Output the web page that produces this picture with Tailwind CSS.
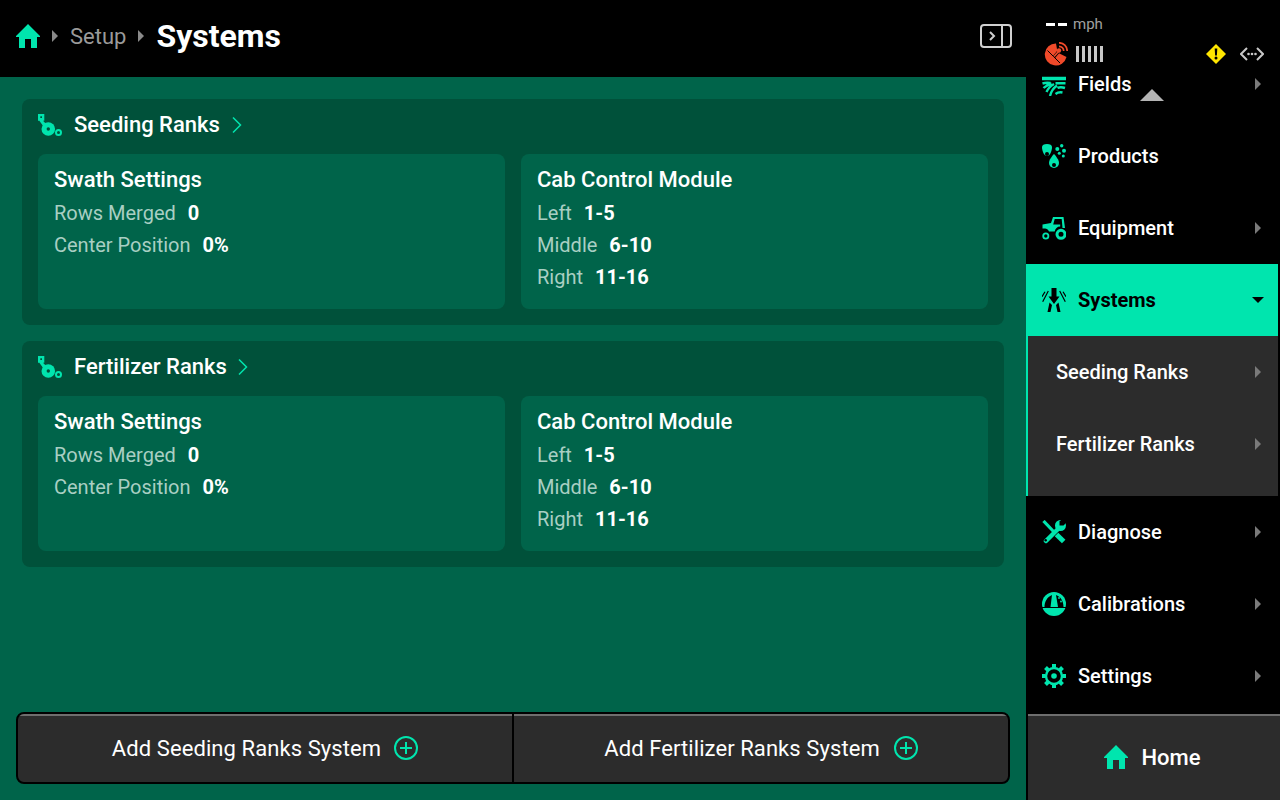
<!DOCTYPE html>
<html lang="en">
<head>
  <meta charset="UTF-8">
  <title>Systems</title>
  <script src="https://cdn.jsdelivr.net/npm/@tailwindcss/browser@4"></script>
</head>
<body class="w-[1280px] h-[800px] overflow-hidden bg-black text-white font-['Roboto',sans-serif]">
  <div class="flex h-[800px]">

    <!-- main column -->
    <div class="w-[1026px] flex flex-col bg-[#00644a]">
      <header class="h-[77px] bg-black flex items-center pl-4 pr-[14px] pb-[5px]">
        <svg class="w-6 h-6 text-[#00e5ae]" viewBox="0 0 24 24" fill="currentColor"><path d="M12 0 24 12v1h-3v11h-6v-9H9v9H3V13H0v-1z"/></svg>
        <svg class="w-[6px] h-3 ml-[12px] text-[#8a8a8a]" viewBox="0 0 6 12" fill="currentColor"><path d="M0 0l6 6-6 6z"/></svg>
        <span class="ml-[12px] text-[22px] text-[#9a9a9a]">Setup</span>
        <svg class="w-[6px] h-3 ml-[12px] text-[#8a8a8a]" viewBox="0 0 6 12" fill="currentColor"><path d="M0 0l6 6-6 6z"/></svg>
        <span class="ml-3 text-[32px] font-bold">Systems</span>
        <svg class="ml-auto w-8 h-6 text-[#d0d0d0]" viewBox="0 0 32 24" fill="none" stroke="currentColor" stroke-width="2"><rect x="1" y="1" width="30" height="22" rx="3"/><path d="M22 1v22"/><path d="M10 8l4 4-4 4"/></svg>
      </header>

      <main class="flex-1 flex flex-col px-4 pt-[22px] pb-4">
        <div class="flex flex-col gap-4 px-[6px]">
          <section class="bg-[#00513a] rounded-lg px-4 pb-4">
            <div class="h-[55px] pb-1 flex items-center">
              <svg class="w-6 h-6 text-[#00e5ae]" viewBox="0 0 24 24" fill="currentColor"><path d="M0 1h6.300v6.700H5L10 13l-3 2.500-5.500-7.500v-.3H0z"/><rect x="2.300" y="3.300" width="1.700" height="1.700" fill="#00513a"/><circle cx="10.300" cy="16" r="6.800"/><circle cx="10.300" cy="16" r="1.700" fill="#00513a"/><circle cx="20.500" cy="19.500" r="2.500" fill="none" stroke="currentColor" stroke-width="2"/></svg>
              <span class="ml-3 text-[22px] font-medium">Seeding Ranks</span>
              <svg class="ml-3 w-[10px] h-4 text-[#00e5ae]" viewBox="0 0 10 16" fill="none" stroke="currentColor" stroke-width="1.500"><path d="M1 .5l7.500 7.500L1 15.500"/></svg>
            </div>
            <div class="grid grid-cols-2 gap-4">
              <div class="h-[155px] bg-[#00644a] rounded-lg px-4 pt-[11px]">
                <h3 class="text-[22px] leading-[30px] font-medium">Swath Settings</h3>
                <p class="mt-[2px] text-[20px] leading-8 text-[#a9cfc3]">Rows Merged <b class="ml-[7px] font-bold text-white">0</b></p>
                <p class="text-[20px] leading-8 text-[#a9cfc3]">Center Position <b class="ml-[7px] font-bold text-white">0%</b></p>
              </div>
              <div class="h-[155px] bg-[#00644a] rounded-lg px-4 pt-[11px]">
                <h3 class="text-[22px] leading-[30px] font-medium">Cab Control Module</h3>
                <p class="mt-[2px] text-[20px] leading-8 text-[#a9cfc3]">Left <b class="ml-[7px] font-bold text-white">1-5</b></p>
                <p class="text-[20px] leading-8 text-[#a9cfc3]">Middle <b class="ml-[7px] font-bold text-white">6-10</b></p>
                <p class="text-[20px] leading-8 text-[#a9cfc3]">Right <b class="ml-[7px] font-bold text-white">11-16</b></p>
              </div>
            </div>
          </section>

          <section class="bg-[#00513a] rounded-lg px-4 pb-4">
            <div class="h-[55px] pb-1 flex items-center">
              <svg class="w-6 h-6 text-[#00e5ae]" viewBox="0 0 24 24" fill="currentColor"><path d="M0 1h6.300v6.700H5L10 13l-3 2.500-5.500-7.500v-.3H0z"/><rect x="2.300" y="3.300" width="1.700" height="1.700" fill="#00513a"/><circle cx="10.300" cy="16" r="6.800"/><circle cx="10.300" cy="16" r="1.700" fill="#00513a"/><circle cx="20.500" cy="19.500" r="2.500" fill="none" stroke="currentColor" stroke-width="2"/></svg>
              <span class="ml-3 text-[22px] font-medium">Fertilizer Ranks</span>
              <svg class="ml-[11px] w-[10px] h-4 text-[#00e5ae]" viewBox="0 0 10 16" fill="none" stroke="currentColor" stroke-width="1.500"><path d="M1 .5l7.500 7.500L1 15.500"/></svg>
            </div>
            <div class="grid grid-cols-2 gap-4">
              <div class="h-[155px] bg-[#00644a] rounded-lg px-4 pt-[11px]">
                <h3 class="text-[22px] leading-[30px] font-medium">Swath Settings</h3>
                <p class="mt-[2px] text-[20px] leading-8 text-[#a9cfc3]">Rows Merged <b class="ml-[7px] font-bold text-white">0</b></p>
                <p class="text-[20px] leading-8 text-[#a9cfc3]">Center Position <b class="ml-[7px] font-bold text-white">0%</b></p>
              </div>
              <div class="h-[155px] bg-[#00644a] rounded-lg px-4 pt-[11px]">
                <h3 class="text-[22px] leading-[30px] font-medium">Cab Control Module</h3>
                <p class="mt-[2px] text-[20px] leading-8 text-[#a9cfc3]">Left <b class="ml-[7px] font-bold text-white">1-5</b></p>
                <p class="text-[20px] leading-8 text-[#a9cfc3]">Middle <b class="ml-[7px] font-bold text-white">6-10</b></p>
                <p class="text-[20px] leading-8 text-[#a9cfc3]">Right <b class="ml-[7px] font-bold text-white">11-16</b></p>
              </div>
            </div>
          </section>
        </div>

        <div class="mt-auto h-[72px] flex border-2 border-black rounded-lg overflow-hidden bg-[#2c2c2c]">
          <button class="flex-1 flex items-center justify-center gap-[13px] border-t-2 border-[#6e6e6e] pb-[2px] text-[22px] tracking-[0.08px]">
            Add Seeding Ranks System
            <svg class="w-6 h-6 text-[#00e5ae]" viewBox="0 0 24 24" fill="none" stroke="currentColor" stroke-width="2"><circle cx="12" cy="12" r="11"/><path d="M12 6v12M6 12h12"/></svg>
          </button>
          <div class="w-[2px] bg-black"></div>
          <button class="flex-1 flex items-center justify-center gap-[14px] border-t-2 border-[#6e6e6e] pb-[2px] text-[22px] tracking-[0.08px]">
            Add Fertilizer Ranks System
            <svg class="w-6 h-6 text-[#00e5ae]" viewBox="0 0 24 24" fill="none" stroke="currentColor" stroke-width="2"><circle cx="12" cy="12" r="11"/><path d="M12 6v12M6 12h12"/></svg>
          </button>
        </div>
      </main>
    </div>

    <!-- side menu -->
    <aside class="relative w-[254px] bg-black flex flex-col">
      <div class="relative z-10 h-[76px] bg-black">
        <div class="flex items-center h-[16px] mt-4 pl-5">
          <span class="w-[9px] h-[3px] bg-white"></span>
          <span class="ml-[3px] w-[9px] h-[3px] bg-white"></span>
          <span class="ml-[6px] text-[15px] text-[#a0a0a0]">mph</span>
        </div>
        <div class="flex items-center h-6 mt-[10px] pl-[18px] pr-[16px]">
          <svg class="w-6 h-6 text-[#f04a2a]" viewBox="0 0 24 24" fill="currentColor"><path d="M12 1.500A11 11 0 1 0 22.500 15L14.500 11l-1 -1z"/><path d="M3.500 8.500 16 21" stroke="#000" stroke-width="1" fill="none"/><path d="M10 15l5-6" stroke="#000" stroke-width="2.800" fill="none"/><path d="M10 14.500l5-5.500" stroke="currentColor" stroke-width="1.800" fill="none"/><circle cx="15" cy="8.500" r="2.200"/><path d="M15 .8a8.200 8.200 0 0 1 8.200 8.200M15 4.300a4.700 4.700 0 0 1 4.700 4.700" fill="none" stroke="currentColor" stroke-width="1.700"/></svg>
          <div class="flex gap-[3px] ml-2">
            <span class="w-[3px] h-4 bg-[#c8c8c8]"></span>
            <span class="w-[3px] h-4 bg-[#c8c8c8]"></span>
            <span class="w-[3px] h-4 bg-[#c8c8c8]"></span>
            <span class="w-[3px] h-4 bg-[#c8c8c8]"></span>
            <span class="w-[3px] h-4 bg-[#c8c8c8]"></span>
          </div>
          <svg class="ml-auto w-5 h-5" viewBox="0 0 20 20"><path d="M10 0l10 10-10 10L0 10z" fill="#ffe600"/><path d="M8.700 4.500h2.600l-.4 7H9.100z M10 12.500a1.500 1.500 0 1 1 0 3 1.500 1.500 0 0 1 0-3z" fill="#000"/></svg>
          <svg class="ml-[14px] w-6 h-[14px] text-[#c8c8c8]" viewBox="0 0 24 14" fill="none" stroke="currentColor" stroke-width="2"><path d="M7 1 1 7l6 6M17 1l6 6-6 6"/><g fill="currentColor" stroke="none"><circle cx="8.500" cy="7" r="1.300"/><circle cx="12" cy="7" r="1.300"/><circle cx="15.500" cy="7" r="1.300"/></g></svg>
        </div>
      </div>

      <nav class="-mt-[28px] flex-1 flex flex-col">
        <div class="h-[72px] flex items-center pl-4 pr-[19px] text-[20px] font-medium">
          <svg class="w-6 h-6 text-[#00e5ae] shrink-0" viewBox="0 0 24 24" fill="none" stroke="currentColor" stroke-width="2.400"><path d="M0 6.500h24" stroke-width="3.500"/><path d="M.5 11.500c3-1 5-1 8-.5M1.500 16c2.500-2.500 5-3.500 8-4.500M4.500 20c1.500-3.500 4-6 7.500-8M8 24c1-4.500 3.500-8 7-10.500M23.500 11.300H13.500M23 16c-3-1-5.500-1-7.500 0M20.500 20.500c-2.500-.5-5 0-7 1.500"/></svg>
          <span class="ml-3">Fields</span>
          <svg class="ml-auto w-[6px] h-3 text-[#7a7a7a]" viewBox="0 0 6 12" fill="currentColor"><path d="M0 0l6 6-6 6z"/></svg>
        </div>
        <div class="h-[72px] flex items-center pl-4 pr-[19px] text-[20px] font-medium">
          <svg class="w-6 h-6 text-[#00e5ae] shrink-0" viewBox="0 0 24 24" fill="currentColor"><path d="M0 3c0-2 2-3 5-3s5 1 5 3c0 4-2 9-5 9S0 7 0 3z"/><circle cx="5" cy="10" r="2" fill="#000"/><path d="M12 10c2 2 5 6 5 9a5 5 0 0 1-10 0c0-3 3-7 5-9z"/><circle cx="12" cy="21" r="2" fill="#000"/><circle cx="15.300" cy="5" r="2"/><circle cx="19.700" cy="1.700" r="1.700"/><circle cx="22" cy="6.700" r="2"/><circle cx="17.300" cy="9.300" r="1.500"/><circle cx="21.300" cy="12" r="1.500"/></svg>
          <span class="ml-3">Products</span>
        </div>
        <div class="h-[72px] flex items-center pl-4 pr-[19px] text-[20px] font-medium">
          <svg class="w-6 h-6 text-[#00e5ae] shrink-0" viewBox="0 0 24 24" fill="currentColor"><path d="M.500 8.500 9 7 11 1h10.500l1.500 11h-2.500l-.8-9h-7l-1.500 5.500h7v2c-3 0-5 2-5.500 5H7c-.7-2-2.500-3-4-3H.500z"/><circle cx="3.800" cy="20" r="2.600" fill="none" stroke="currentColor" stroke-width="1.800"/><circle cx="19" cy="18.300" r="4" fill="none" stroke="currentColor" stroke-width="3"/></svg>
          <span class="ml-3">Equipment</span>
          <svg class="ml-auto w-[6px] h-3 text-[#7a7a7a]" viewBox="0 0 6 12" fill="currentColor"><path d="M0 0l6 6-6 6z"/></svg>
        </div>
        <div class="h-[72px] mr-[2px] flex items-center pl-4 pr-[14px] bg-[#00e5ae] text-black text-[20px] font-bold">
          <svg class="w-6 h-6 shrink-0" viewBox="0 0 24 24" fill="currentColor"><path d="M9.500 0h5v8.500h3L12 16 6.500 8.500h3z"/><path d="M7.500 14.500 10 17l-1.500 7H5.500zM16.500 14.500 14 17l1.500 7h3z"/><path d="M6.300 3 .7 13.700M3 3.700 0 8.700M17.700 3l5.600 10.700M21 3.700l3 5" stroke="currentColor" stroke-width="1.200" fill="none"/></svg>
          <span class="ml-3">Systems</span>
          <svg class="ml-auto w-3 h-[6px]" viewBox="0 0 12 6" fill="currentColor"><path d="M0 0h12L6 6z"/></svg>
        </div>
        <div class="h-[160px] mr-[2px] pb-4 bg-[#2c2c2c] border-l-2 border-[#00e5ae] text-[20px] font-medium">
          <div class="h-[72px] flex items-center pl-7 pr-[17px]">
            <span>Seeding Ranks</span>
            <svg class="ml-auto w-[6px] h-3 text-[#7a7a7a]" viewBox="0 0 6 12" fill="currentColor"><path d="M0 0l6 6-6 6z"/></svg>
          </div>
          <div class="h-[72px] flex items-center pl-7 pr-[17px]">
            <span>Fertilizer Ranks</span>
            <svg class="ml-auto w-[6px] h-3 text-[#7a7a7a]" viewBox="0 0 6 12" fill="currentColor"><path d="M0 0l6 6-6 6z"/></svg>
          </div>
        </div>
        <div class="h-[72px] flex items-center pl-4 pr-[19px] text-[20px] font-medium">
          <svg class="w-6 h-6 text-[#00e5ae] shrink-0" viewBox="0 0 24 24" fill="none" stroke="currentColor"><path d="M1.500 1 12 12" stroke-width="3.200"/><path d="M14.500 14.500 21.700 21.500" stroke-width="5"/><path d="M4 21 17 8" stroke-width="4.500" stroke-linecap="round"/><circle cx="18.500" cy="5.500" r="5.500" fill="currentColor" stroke="none"/><path d="M24 0h-5l-1.500 1.500v4h4L24 3z" fill="#000" stroke="none"/><circle cx="3.700" cy="20.300" r="1.200" fill="#000" stroke="none"/></svg>
          <span class="ml-3">Diagnose</span>
          <svg class="ml-auto w-[6px] h-3 text-[#7a7a7a]" viewBox="0 0 6 12" fill="currentColor"><path d="M0 0l6 6-6 6z"/></svg>
        </div>
        <div class="h-[72px] flex items-center pl-4 pr-[19px] text-[20px] font-medium">
          <svg class="w-6 h-6 text-[#00e5ae] shrink-0" viewBox="0 0 24 24" fill="currentColor"><circle cx="12" cy="12" r="12"/><path d="M10 3 8.500 15H2.500C2.500 10 5 5 10 3zM14 3l2 12h5.500C21.500 9 18.500 4.500 14 3z" fill="#000"/><path d="M0 15.500h24" stroke="#000" stroke-width="1"/><circle cx="17" cy="6" r=".9"/><circle cx="19" cy="9.500" r=".9"/></svg>
          <span class="ml-3">Calibrations</span>
          <svg class="ml-auto w-[6px] h-3 text-[#7a7a7a]" viewBox="0 0 6 12" fill="currentColor"><path d="M0 0l6 6-6 6z"/></svg>
        </div>
        <div class="h-[72px] flex items-center pl-4 pr-[19px] text-[20px] font-medium">
          <svg class="w-6 h-6 text-[#00e5ae] shrink-0" viewBox="0 0 24 24" fill="none" stroke="currentColor"><circle cx="12" cy="12" r="8" stroke-width="2.400"/><circle cx="12" cy="12" r="2.800" fill="currentColor" stroke="none"/><path d="M12 0v3.500M12 20.500V24M0 12h3.500M20.500 12H24M3.500 3.500 6 6M18 18l2.500 2.500M20.500 3.500 18 6M6 18l-2.500 2.500" stroke-width="4"/></svg>
          <span class="ml-3">Settings</span>
          <svg class="ml-auto w-[6px] h-3 text-[#7a7a7a]" viewBox="0 0 6 12" fill="currentColor"><path d="M0 0l6 6-6 6z"/></svg>
        </div>
      </nav>

      <button class="ml-[2px] h-[86px] pb-[2px] bg-[#2c2c2c] border-t-2 border-[#6e6e6e] flex items-center justify-center gap-[13px] pr-[3px] text-[22px] font-medium">
        <svg class="w-6 h-6 text-[#00e5ae]" viewBox="0 0 24 24" fill="currentColor"><path d="M12 0 24 12v1h-3v11h-6v-9H9v9H3V13H0v-1z"/></svg>
        Home
      </button>

      <!-- scroll hint over the list -->
      <span class="absolute z-20 left-[114px] top-[89px] w-6 h-3 bg-[#b4b4b4] [clip-path:polygon(50%_0,100%_100%,0_100%)]"></span>
    </aside>
  </div>
</body>
</html>
